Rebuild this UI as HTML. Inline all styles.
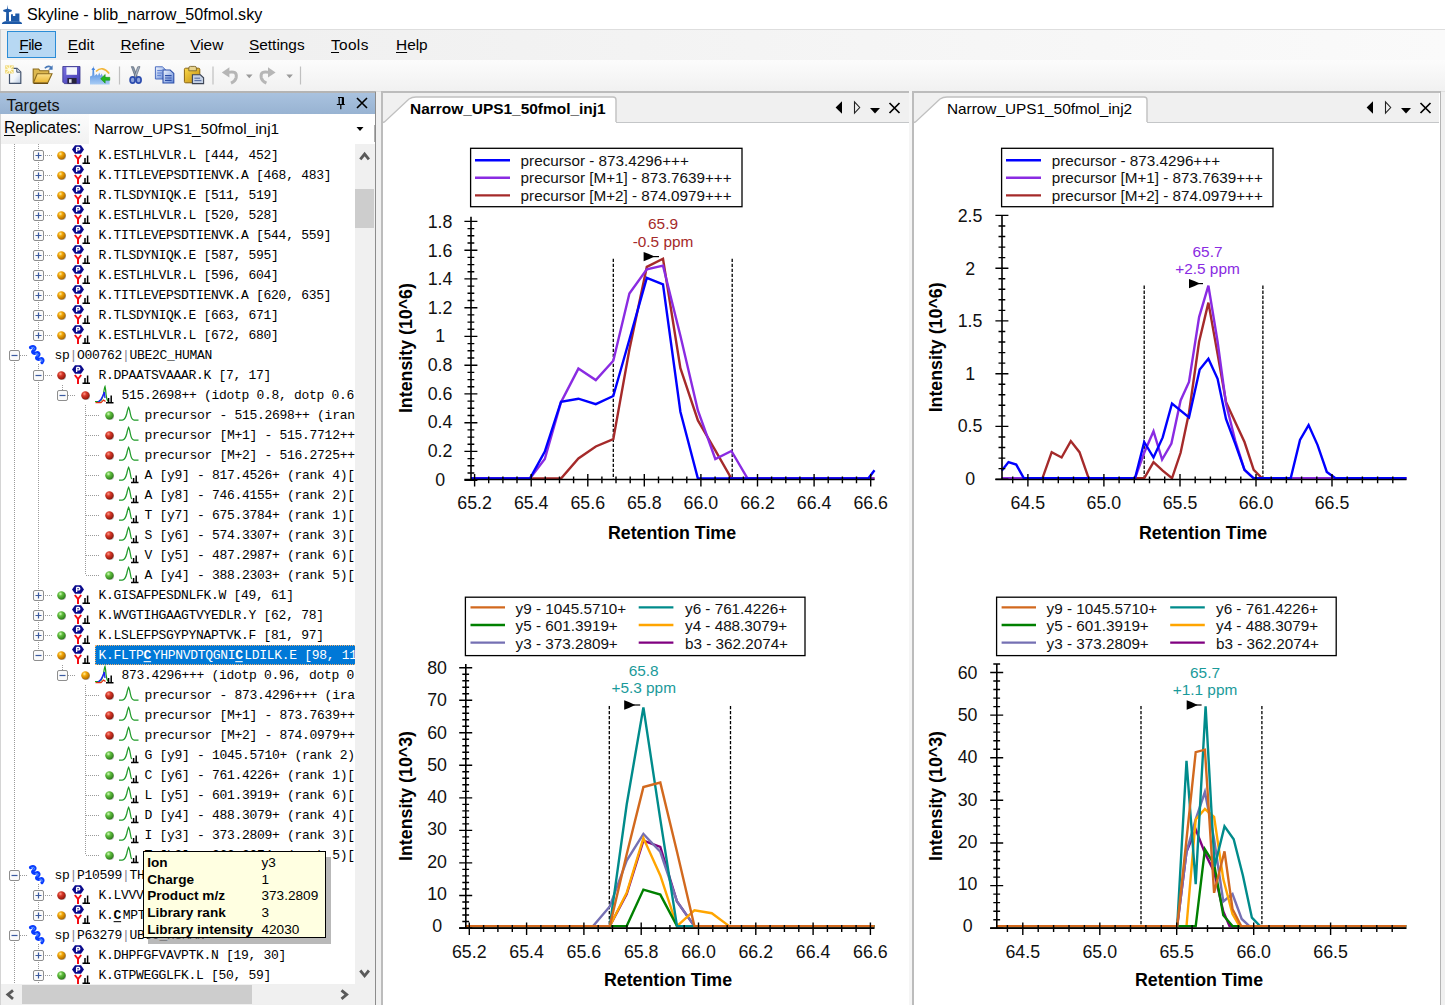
<!DOCTYPE html><html><head><meta charset="utf-8"><title>Skyline</title><style>
*{margin:0;padding:0;box-sizing:border-box}
html,body{width:1445px;height:1005px;overflow:hidden;background:#f0f0f0;font-family:"Liberation Sans",sans-serif;}
.abs{position:absolute}
.t{position:absolute;white-space:pre;line-height:1;color:#000}
u{text-decoration:underline;text-underline-offset:2px}
.mono{font-family:"Liberation Mono",monospace;font-size:13px;letter-spacing:-0.3px;position:absolute;white-space:pre;line-height:20px;height:20px;color:#000;transform-origin:0 50%;transform:scaleY(1.03);margin-top:1.1px}
svg{position:absolute;overflow:visible}
.mono b{margin-right:1.6px}
svg text{font-family:"Liberation Sans",sans-serif}
</style></head><body>
<svg width="0" height="0" style="position:absolute"><defs>
<radialGradient id="gR" cx="38%" cy="32%" r="70%"><stop offset="0" stop-color="#ff9a8a"/><stop offset="0.35" stop-color="#d83a2a"/><stop offset="1" stop-color="#8a1408"/></radialGradient>
<radialGradient id="gY" cx="38%" cy="32%" r="70%"><stop offset="0" stop-color="#fff0a0"/><stop offset="0.35" stop-color="#f2a80a"/><stop offset="1" stop-color="#a86400"/></radialGradient>
<radialGradient id="gG" cx="38%" cy="32%" r="70%"><stop offset="0" stop-color="#d8ffc0"/><stop offset="0.35" stop-color="#62c040"/><stop offset="1" stop-color="#2a7a18"/></radialGradient>
<g id="plus"><rect x="0.5" y="0.5" width="10" height="10" rx="1.5" fill="#fafafa" stroke="#8e8e8e"/><path d="M2.5 5.5h6M5.5 2.5v6" stroke="#3b5aa0" stroke-width="1.2"/></g>
<g id="minus"><rect x="0.5" y="0.5" width="10" height="10" rx="1.5" fill="#fafafa" stroke="#8e8e8e"/><path d="M2.5 5.5h6" stroke="#3b5aa0" stroke-width="1.2"/></g>
<g id="dotR"><circle cx="5" cy="5" r="4" fill="#555" opacity=".45"/><circle cx="4.4" cy="4.4" r="4.2" fill="url(#gR)"/></g>
<g id="dotY"><circle cx="5" cy="5" r="4" fill="#555" opacity=".45"/><circle cx="4.4" cy="4.4" r="4.2" fill="url(#gY)"/></g>
<g id="dotG"><circle cx="5" cy="5" r="4" fill="#555" opacity=".45"/><circle cx="4.4" cy="4.4" r="4.2" fill="url(#gG)"/></g>
<g id="pep"><path d="M0 4.5 L3 0.3 H9 L12 4.5 L9 8.7 H3 Z" fill="#0a0a8c"/><path d="M4.6 2.2V7 M4.6 2.5H6.6Q7.8 2.5 7.8 3.7T6.6 4.9H4.6" stroke="#fff" stroke-width="1.3" fill="none"/><path d="M2.8 10 L6 14 L9.2 10 M6 14 V19" stroke="#f40c14" stroke-width="2" fill="none"/><path d="M10.5 18.3H18 M13 18V13 M15.6 18V10.5" stroke="#000" stroke-width="1.5" fill="none"/></g>
<g id="prot"><path d="M1.5 1.5 C5 -0.5 7.5 2 5 4 C2.5 6 4 8 7 7 C10 6 11 8.5 8.5 10.5 C6.5 12 8 14 11 13 C14 12 15 14.5 13 16.5" stroke="#0a3cff" stroke-width="3.2" fill="none" stroke-linecap="round"/><path d="M2 2 C5 0.5 6.5 2 4.5 4 M6.5 7.5 C9 6.8 10 8.5 8 10.5 M10.5 13.4 C13 12.5 14 14.5 12.5 16" stroke="#5aa0ff" stroke-width="1" fill="none"/></g>
<g id="prec"><path d="M0 15.5 H4 Q7 15.5 8.5 8 Q9.3 2 10 0.5 Q10.8 4 11 8 Q11.5 13 13 15.5" stroke="#1a9a1a" stroke-width="1.2" fill="none"/><path d="M3 16 Q6.5 14 8 9.5 L9.3 6 L10 12 " stroke="#1a1aff" stroke-width="1.3" fill="none"/><path d="M0.5 16.6 H6 L8.5 14 L10.5 15.5" stroke="#e03010" stroke-width="1.3" fill="none"/><path d="M11 16.8H18.5 M13.6 16.5V12 M16.2 16.5V9.5" stroke="#000" stroke-width="1.5" fill="none"/></g>
<g id="tr"><path d="M0 13 H3.2 Q6.2 13 7.8 6.5 Q8.9 1.5 9.6 0.3 Q10.4 1.5 11.3 6.5 Q12.5 13 15 13 H19.5" stroke="#1e9a28" stroke-width="1.25" fill="none"/></g>
<g id="trb"><path d="M0 13 H3.2 Q6.2 13 7.8 6.5 Q8.9 1.5 9.6 0.3 Q10.4 1.5 11.3 6.5 Q11.8 10 12.6 12" stroke="#1e9a28" stroke-width="1.25" fill="none"/><path d="M12 15.6H19.5 M14.6 15.4V11 M17.2 15.4V8.5" stroke="#000" stroke-width="1.5" fill="none"/></g>
</defs></svg>
<div class="abs" style="left:0;top:0;width:1445px;height:29px;background:#fff"></div>
<svg style="left:0;top:0" width="26" height="28" viewBox="0 0 26 28"><path d="M1.9 24 Q2 21.9 5.2 21.3 H18.8 Q22 21.9 22.1 24 Z" fill="#1d59a7"/><path d="M7.55 4.8 L8 8.7 L11.9 10.1 L11.5 11.5 L8.9 12.3 L9.1 21.6 H6 L6.2 12.3 L3.5 11.5 L3.1 10.1 L7.1 8.7 Z" fill="#1d59a7"/><path d="M11 21.6 V14.3 H12.9 V16 H15.3 V13.5 H19.4 V21.6 Z" fill="#1d59a7"/></svg>
<div class="t" style="left:27px;top:6.4px;font-size:16.1px">Skyline - blib_narrow_50fmol.sky</div>
<div class="abs" style="left:0;top:29px;width:1445px;height:31px;background:linear-gradient(90deg,#f0f0f0 0,#f0f0f0 20%,#fafafa 100%);border-top:1px solid #dedede"></div>
<div class="abs" style="left:7.3px;top:31.2px;width:49px;height:26.5px;background:#b7d8f3;border:1.4px solid #2b8cd6"></div>
<div class="t" style="left:19.2px;top:37px;font-size:15.4px;letter-spacing:-0.45px"><u>F</u>ile</div>
<div class="t" style="left:67.8px;top:37px;font-size:15.4px;"><u>E</u>dit</div>
<div class="t" style="left:120.4px;top:37px;font-size:15.4px;"><u>R</u>efine</div>
<div class="t" style="left:190.2px;top:37px;font-size:15.4px;"><u>V</u>iew</div>
<div class="t" style="left:249.0px;top:37px;font-size:15.4px;"><u>S</u>ettings</div>
<div class="t" style="left:331.0px;top:37px;font-size:15.4px;letter-spacing:0.35px"><u>T</u>ools</div>
<div class="t" style="left:396.0px;top:37px;font-size:15.4px;"><u>H</u>elp</div>
<div class="abs" style="left:0;top:60px;width:1445px;height:31px;background:linear-gradient(#fcfcfc,#f1f1f1)"></div>
<div class="abs" style="left:0;top:91px;width:1445px;height:1px;background:#e0e0e0"></div>
<svg style="left:0;top:60px" width="320" height="31" viewBox="0 60 320 31">
<defs>
<linearGradient id="pg" x1="0" y1="0" x2="1" y2="1"><stop offset="0" stop-color="#fff"/><stop offset=".55" stop-color="#f2f6fb"/><stop offset="1" stop-color="#b4c6de"/></linearGradient>
<linearGradient id="fo" x1="0" y1="0" x2="0" y2="1"><stop offset="0" stop-color="#fbe08a"/><stop offset="1" stop-color="#eab530"/></linearGradient>
<linearGradient id="sv" x1="0" y1="0" x2="1" y2="1"><stop offset="0" stop-color="#7a72e0"/><stop offset="1" stop-color="#3f38b0"/></linearGradient>
<linearGradient id="sk" x1="0" y1="0" x2="0" y2="1"><stop offset="0" stop-color="#2f74d8"/><stop offset="1" stop-color="#a8ccf4"/></linearGradient>
<linearGradient id="cp" x1="0" y1="0" x2="1" y2="1"><stop offset="0" stop-color="#f4f8ff"/><stop offset="1" stop-color="#5f86d8"/></linearGradient>
<linearGradient id="cb" x1="0" y1="0" x2="1" y2="1"><stop offset="0" stop-color="#fbd84a"/><stop offset="1" stop-color="#c08c10"/></linearGradient>
</defs>
<!-- new -->
<path d="M9.5 68.3 H17 L20.8 72 V83.4 H9.5 Z" fill="url(#pg)" stroke="#44546e" stroke-width="1.2"/><path d="M16.8 68.5V72.2H20.6" fill="#dfe6f0" stroke="#44546e" stroke-width="1"/>
<rect x="5.2" y="65.4" width="8.4" height="8" fill="#ecd060" opacity=".9"/><path d="M9.4 64.8v9.2 M4.8 69.4h9.2 M6 66l6.8 6.8 M12.8 66l-6.8 6.8" stroke="#fff6c8" stroke-width="1.1"/><circle cx="9.4" cy="69.4" r="1.6" fill="#fffbe6"/>
<!-- open -->
<path d="M33.2 82.6 V69 H38.6 L40 70.8 H48.8 V74" fill="#dcb850" stroke="#8a6a1c" stroke-width="1.1"/><path d="M33.4 82.8 L37.2 73.8 H52 L47.8 82.8 Z" fill="url(#fo)" stroke="#8a6a1c" stroke-width="1.1"/><path d="M33.5 83.5H48" stroke="#6a4c10" stroke-width="1"/>
<path d="M44.8 68.3 Q48 64.8 51.4 67.6" fill="none" stroke="#4878b8" stroke-width="1.5"/><path d="M52.6 65.2 V69.8 H48.2 Z" fill="#4878b8"/>
<!-- save -->
<path d="M62.8 66.5 H80 V83.6 H64.3 L62.8 82.1 Z" fill="url(#sv)" stroke="#34308a" stroke-width=".8"/><rect x="66.4" y="67.2" width="10.6" height="7.6" fill="#f4f6fb"/><rect x="67.4" y="78" width="9.2" height="5.6" fill="#26243c"/><rect x="69" y="79.2" width="2.6" height="3.6" fill="#e0e0ea"/>
<!-- import -->
<path d="M90 84.4 V76.5 L92.2 75.5 L92.6 70.2 L91.4 69.4 L93 67.8 L93.2 65.8 L93.6 67.8 L95.2 69.4 L94 70.2 L94.5 76 L96.5 74 L98 75.8 L99.2 72.4 L100.4 75.8 L101.8 73.6 L103 77 H106.5 V79 H109.6 V84.4 Z" fill="url(#sk)"/>
<path d="M96 71.5 Q102.5 65.2 109.2 73.6" fill="none" stroke="#f2b63a" stroke-width="1.6"/>
<path d="M109.8 77.3 H105.2 V74.4 L100.6 78.8 L105.2 83.2 V80.3 H109.8 Z" fill="#24b41e" stroke="#128a10" stroke-width=".5"/>
<path d="M119.5 66.5V84.5" stroke="#c0c0c0" stroke-width="1.2"/>
<!-- cut -->
<path d="M131.3 66.6 L133.6 66.8 L137.2 76.4 L135.4 77.4 Z" fill="#8e9cae" stroke="#4c5868" stroke-width=".6"/><path d="M140 66.6 L137.7 66.8 L134.1 76.4 L135.9 77.4 Z" fill="#aab6c6" stroke="#4c5868" stroke-width=".6"/>
<ellipse cx="132.6" cy="80" rx="2.5" ry="3.1" fill="#8ea4dc" stroke="#2c4cae" stroke-width="1.7"/><ellipse cx="138.6" cy="80" rx="2.5" ry="3.1" fill="#8ea4dc" stroke="#2c4cae" stroke-width="1.7"/>
<!-- copy -->
<path d="M155.4 66.8 H162.4 L165.8 70 V79 H155.4 Z" fill="url(#cp)" stroke="#4a6cc0" stroke-width="1"/><path d="M163 70 H170.2 L173.8 73.4 V83 H163 Z" fill="url(#cp)" stroke="#2c4ea8" stroke-width="1.1"/><path d="M157.2 70.6h5 M157.2 73h5 M157.2 75.4h4" stroke="#5a7cd0" stroke-width="1"/><path d="M165 75.6h6.6 M165 78h6.6 M165 80.4h6.6" stroke="#2c4ea8" stroke-width="1.1"/>
<!-- paste -->
<rect x="184.4" y="68.2" width="15.4" height="14.6" rx="1.2" fill="url(#cb)" stroke="#8a6410" stroke-width="1"/><path d="M188.8 70.8 V68 Q188.8 66.4 190.4 66.4 H194.8 Q196.4 66.4 196.4 68 V70.8 Z" fill="#e8d490" stroke="#7a6428" stroke-width=".9"/><path d="M192.4 74.8 H200.4 L203.6 77.8 V83.6 H192.4 Z" fill="#c4d0e4" stroke="#3c4454" stroke-width="1.1"/><path d="M194.4 78.2h5.6 M194.4 80.6h7" stroke="#5068a0" stroke-width="1"/>
<path d="M213 66.5V84.5" stroke="#c0c0c0" stroke-width="1.2"/>
<!-- undo -->
<path d="M228 72.4 Q237.4 70.2 236.2 77.6 Q235.4 81.2 231 83.2" fill="none" stroke="#b6b6b6" stroke-width="3"/><path d="M221.8 72.6 L229.4 67.2 V77.6 Z" fill="#b6b6b6"/>
<path d="M246 74.5 h6.6 l-3.3 3.7 Z" fill="#9a9a9a"/>
<!-- redo -->
<path d="M269.4 72.4 Q260 70.2 261.2 77.6 Q262 81.2 266.4 83.2" fill="none" stroke="#b6b6b6" stroke-width="3"/><path d="M275.6 72.6 L268 67.2 V77.6 Z" fill="#b6b6b6"/>
<path d="M286.3 74.5 h6.6 l-3.3 3.7 Z" fill="#9a9a9a"/>
<path d="M300.5 66.5V84.5" stroke="#c0c0c0" stroke-width="1.2"/>
</svg>
<div class="abs" style="left:0;top:29px;width:1px;height:63px;background:#d2d2d2"></div>
<div class="abs" style="left:0;top:92.6px;width:376px;height:21.2px;background:linear-gradient(#a9c2df,#98b3d2)"></div>
<div class="abs" style="left:0;top:91.3px;width:376px;height:1.3px;background:#b4b4b4"></div>
<div class="t" style="left:6.4px;top:96.5px;font-size:16.2px;color:#111">Targets</div>
<svg style="left:330px;top:92px" width="46" height="22" viewBox="330 92 46 22"><path d="M338 97.5h5.6 M339.2 97.5v7 M342.4 97.5v7 M343.4 97.5v7 M336.8 104.5h8 M340.8 104.5v4.8" stroke="#000" stroke-width="1.2" fill="none"/><path d="M357 98 L367 108 M367 98 L357 108" stroke="#000" stroke-width="1.6"/></svg>
<div class="abs" style="left:0;top:114px;width:376px;height:30px;background:#fff"></div>
<div class="abs" style="left:0;top:114px;width:88.5px;height:30.5px;background:linear-gradient(#fcfcfc,#f1f1f1)"></div>
<div class="t" style="left:4px;top:120px;font-size:15.6px"><u>R</u>eplicates:</div>
<div class="t" style="left:94px;top:121px;font-size:15.35px">Narrow_UPS1_50fmol_inj1</div>
<svg style="left:354px;top:125px" width="12" height="8"><path d="M2.5 2 H9.5 L6 6 Z" fill="#000"/></svg>
<div class="abs" style="left:373.5px;top:125px;width:1.5px;height:17px;background:#b0b0b0"></div>
<div class="abs" id="tree" style="left:1px;top:144px;width:354px;height:840px;background:#fff;overflow:hidden">
<svg style="left:0;top:0" width="354" height="840"><path d="M44 11.5H51 M44 31.5H51 M44 51.5H51 M44 71.5H51 M44 91.5H51 M44 111.5H51 M44 131.5H51 M44 151.5H51 M44 171.5H51 M44 191.5H51 M19 211.5H27 M44 231.5H51 M67 251.5H75 M61.5 241V246 M85 271.5H98 M85 291.5H98 M85 311.5H98 M85 331.5H98 M85 351.5H98 M85 371.5H98 M85 391.5H98 M85 411.5H98 M85 431.5H98 M44 451.5H51 M44 471.5H51 M44 491.5H51 M44 511.5H51 M67 531.5H75 M61.5 521V526 M85 551.5H98 M85 571.5H98 M85 591.5H98 M85 611.5H98 M85 631.5H98 M85 651.5H98 M85 671.5H98 M85 691.5H98 M85 711.5H98 M19 731.5H27 M44 751.5H51 M44 771.5H51 M19 791.5H27 M44 811.5H51 M44 831.5H51 M13.5 0V840 M37.5 0V191 M37.5 220V511 M37.5 740V771 M37.5 800V840 M84.5 261V431 M84.5 541V711" stroke="#9a9a9a" stroke-width="1" stroke-dasharray="1 1" fill="none"/></svg>
<svg style="left:32px;top:6px" width="11" height="11"><use href="#plus"/></svg>
<svg style="left:56.0px;top:7.0px" width="9" height="9"><use href="#dotY"/></svg>
<svg style="left:71.0px;top:1px" width="19" height="20"><use href="#pep"/></svg>
<div class="mono" style="left:97.6px;top:1px;">K.ESTLHLVLR.L [444, 452]</div>
<svg style="left:32px;top:26px" width="11" height="11"><use href="#plus"/></svg>
<svg style="left:56.0px;top:27.0px" width="9" height="9"><use href="#dotY"/></svg>
<svg style="left:71.0px;top:21px" width="19" height="20"><use href="#pep"/></svg>
<div class="mono" style="left:97.6px;top:21px;">K.TITLEVEPSDTIENVK.A [468, 483]</div>
<svg style="left:32px;top:46px" width="11" height="11"><use href="#plus"/></svg>
<svg style="left:56.0px;top:47.0px" width="9" height="9"><use href="#dotY"/></svg>
<svg style="left:71.0px;top:41px" width="19" height="20"><use href="#pep"/></svg>
<div class="mono" style="left:97.6px;top:41px;">R.TLSDYNIQK.E [511, 519]</div>
<svg style="left:32px;top:66px" width="11" height="11"><use href="#plus"/></svg>
<svg style="left:56.0px;top:67.0px" width="9" height="9"><use href="#dotY"/></svg>
<svg style="left:71.0px;top:61px" width="19" height="20"><use href="#pep"/></svg>
<div class="mono" style="left:97.6px;top:61px;">K.ESTLHLVLR.L [520, 528]</div>
<svg style="left:32px;top:86px" width="11" height="11"><use href="#plus"/></svg>
<svg style="left:56.0px;top:87.0px" width="9" height="9"><use href="#dotY"/></svg>
<svg style="left:71.0px;top:81px" width="19" height="20"><use href="#pep"/></svg>
<div class="mono" style="left:97.6px;top:81px;">K.TITLEVEPSDTIENVK.A [544, 559]</div>
<svg style="left:32px;top:106px" width="11" height="11"><use href="#plus"/></svg>
<svg style="left:56.0px;top:107.0px" width="9" height="9"><use href="#dotY"/></svg>
<svg style="left:71.0px;top:101px" width="19" height="20"><use href="#pep"/></svg>
<div class="mono" style="left:97.6px;top:101px;">R.TLSDYNIQK.E [587, 595]</div>
<svg style="left:32px;top:126px" width="11" height="11"><use href="#plus"/></svg>
<svg style="left:56.0px;top:127.0px" width="9" height="9"><use href="#dotY"/></svg>
<svg style="left:71.0px;top:121px" width="19" height="20"><use href="#pep"/></svg>
<div class="mono" style="left:97.6px;top:121px;">K.ESTLHLVLR.L [596, 604]</div>
<svg style="left:32px;top:146px" width="11" height="11"><use href="#plus"/></svg>
<svg style="left:56.0px;top:147.0px" width="9" height="9"><use href="#dotY"/></svg>
<svg style="left:71.0px;top:141px" width="19" height="20"><use href="#pep"/></svg>
<div class="mono" style="left:97.6px;top:141px;">K.TITLEVEPSDTIENVK.A [620, 635]</div>
<svg style="left:32px;top:166px" width="11" height="11"><use href="#plus"/></svg>
<svg style="left:56.0px;top:167.0px" width="9" height="9"><use href="#dotY"/></svg>
<svg style="left:71.0px;top:161px" width="19" height="20"><use href="#pep"/></svg>
<div class="mono" style="left:97.6px;top:161px;">R.TLSDYNIQK.E [663, 671]</div>
<svg style="left:32px;top:186px" width="11" height="11"><use href="#plus"/></svg>
<svg style="left:56.0px;top:187.0px" width="9" height="9"><use href="#dotY"/></svg>
<svg style="left:71.0px;top:181px" width="19" height="20"><use href="#pep"/></svg>
<div class="mono" style="left:97.6px;top:181px;">K.ESTLHLVLR.L [672, 680]</div>
<svg style="left:8px;top:206px" width="11" height="11"><use href="#minus"/></svg>
<svg style="left:28px;top:202px" width="17" height="19"><use href="#prot"/></svg>
<div class="mono" style="left:53.4px;top:201px">sp<span style="color:#85838f">|</span>O00762<span style="color:#85838f">|</span>UBE2C_HUMAN</div>
<svg style="left:32px;top:226px" width="11" height="11"><use href="#minus"/></svg>
<svg style="left:56.0px;top:227.0px" width="9" height="9"><use href="#dotR"/></svg>
<svg style="left:71.0px;top:221px" width="19" height="20"><use href="#pep"/></svg>
<div class="mono" style="left:97.6px;top:221px;">R.DPAATSVAAAR.K [7, 17]</div>
<svg style="left:56px;top:246px" width="11" height="11"><use href="#minus"/></svg>
<svg style="left:79.5px;top:247.0px" width="9" height="9"><use href="#dotR"/></svg>
<svg style="left:94.0px;top:242px" width="19" height="20"><use href="#prec"/></svg>
<div class="mono" style="left:120.5px;top:241px">515.2698++ (idotp 0.8, dotp 0.6</div>
<svg style="left:103.5px;top:267.0px" width="9" height="9"><use href="#dotG"/></svg>
<svg style="left:118.0px;top:263px" width="20" height="20"><use href="#tr"/></svg>
<div class="mono" style="left:143.6px;top:261px">precursor - 515.2698++ (irank</div>
<svg style="left:103.5px;top:287.0px" width="9" height="9"><use href="#dotR"/></svg>
<svg style="left:118.0px;top:283px" width="20" height="20"><use href="#tr"/></svg>
<div class="mono" style="left:143.6px;top:281px">precursor [M+1] - 515.7712++ (</div>
<svg style="left:103.5px;top:307.0px" width="9" height="9"><use href="#dotR"/></svg>
<svg style="left:118.0px;top:303px" width="20" height="20"><use href="#tr"/></svg>
<div class="mono" style="left:143.6px;top:301px">precursor [M+2] - 516.2725++ (</div>
<svg style="left:103.5px;top:327.0px" width="9" height="9"><use href="#dotG"/></svg>
<svg style="left:118.0px;top:323px" width="20" height="20"><use href="#trb"/></svg>
<div class="mono" style="left:143.6px;top:321px">A [y9] - 817.4526+ (rank 4)[8</div>
<svg style="left:103.5px;top:347.0px" width="9" height="9"><use href="#dotR"/></svg>
<svg style="left:118.0px;top:343px" width="20" height="20"><use href="#trb"/></svg>
<div class="mono" style="left:143.6px;top:341px">A [y8] - 746.4155+ (rank 2)[7</div>
<svg style="left:103.5px;top:367.0px" width="9" height="9"><use href="#dotR"/></svg>
<svg style="left:118.0px;top:363px" width="20" height="20"><use href="#trb"/></svg>
<div class="mono" style="left:143.6px;top:361px">T [y7] - 675.3784+ (rank 1)[6</div>
<svg style="left:103.5px;top:387.0px" width="9" height="9"><use href="#dotR"/></svg>
<svg style="left:118.0px;top:383px" width="20" height="20"><use href="#trb"/></svg>
<div class="mono" style="left:143.6px;top:381px">S [y6] - 574.3307+ (rank 3)[5</div>
<svg style="left:103.5px;top:407.0px" width="9" height="9"><use href="#dotR"/></svg>
<svg style="left:118.0px;top:403px" width="20" height="20"><use href="#trb"/></svg>
<div class="mono" style="left:143.6px;top:401px">V [y5] - 487.2987+ (rank 6)[4</div>
<svg style="left:103.5px;top:427.0px" width="9" height="9"><use href="#dotG"/></svg>
<svg style="left:118.0px;top:423px" width="20" height="20"><use href="#trb"/></svg>
<div class="mono" style="left:143.6px;top:421px">A [y4] - 388.2303+ (rank 5)[3</div>
<svg style="left:32px;top:446px" width="11" height="11"><use href="#plus"/></svg>
<svg style="left:56.0px;top:447.0px" width="9" height="9"><use href="#dotG"/></svg>
<svg style="left:71.0px;top:441px" width="19" height="20"><use href="#pep"/></svg>
<div class="mono" style="left:97.6px;top:441px;">K.GISAFPESDNLFK.W [49, 61]</div>
<svg style="left:32px;top:466px" width="11" height="11"><use href="#plus"/></svg>
<svg style="left:56.0px;top:467.0px" width="9" height="9"><use href="#dotG"/></svg>
<svg style="left:71.0px;top:461px" width="19" height="20"><use href="#pep"/></svg>
<div class="mono" style="left:97.6px;top:461px;">K.WVGTIHGAAGTVYEDLR.Y [62, 78]</div>
<svg style="left:32px;top:486px" width="11" height="11"><use href="#plus"/></svg>
<svg style="left:56.0px;top:487.0px" width="9" height="9"><use href="#dotG"/></svg>
<svg style="left:71.0px;top:481px" width="19" height="20"><use href="#pep"/></svg>
<div class="mono" style="left:97.6px;top:481px;">K.LSLEFPSGYPYNAPTVK.F [81, 97]</div>
<svg style="left:32px;top:506px" width="11" height="11"><use href="#minus"/></svg>
<svg style="left:56.0px;top:507.0px" width="9" height="9"><use href="#dotY"/></svg>
<svg style="left:71.0px;top:501px" width="19" height="20"><use href="#pep"/></svg>
<div class="abs" style="left:94.2px;top:501.2px;width:300px;height:19.6px;background:#0078d7;border:1px dotted #f0b070"></div>
<div class="mono" style="left:97.6px;top:501px;color:#fff">K.FLTP<b><u>C</u></b>YHPNVDTQGNI<b><u>C</u></b>LDILK.E [98, 119]</div>
<svg style="left:56px;top:526px" width="11" height="11"><use href="#minus"/></svg>
<svg style="left:79.5px;top:527.0px" width="9" height="9"><use href="#dotY"/></svg>
<svg style="left:94.0px;top:522px" width="19" height="20"><use href="#prec"/></svg>
<div class="mono" style="left:120.5px;top:521px">873.4296+++ (idotp 0.96, dotp 0.9</div>
<svg style="left:103.5px;top:547.0px" width="9" height="9"><use href="#dotR"/></svg>
<svg style="left:118.0px;top:543px" width="20" height="20"><use href="#tr"/></svg>
<div class="mono" style="left:143.6px;top:541px">precursor - 873.4296+++ (irank</div>
<svg style="left:103.5px;top:567.0px" width="9" height="9"><use href="#dotR"/></svg>
<svg style="left:118.0px;top:563px" width="20" height="20"><use href="#tr"/></svg>
<div class="mono" style="left:143.6px;top:561px">precursor [M+1] - 873.7639+++</div>
<svg style="left:103.5px;top:587.0px" width="9" height="9"><use href="#dotR"/></svg>
<svg style="left:118.0px;top:583px" width="20" height="20"><use href="#tr"/></svg>
<div class="mono" style="left:143.6px;top:581px">precursor [M+2] - 874.0979+++</div>
<svg style="left:103.5px;top:607.0px" width="9" height="9"><use href="#dotG"/></svg>
<svg style="left:118.0px;top:603px" width="20" height="20"><use href="#trb"/></svg>
<div class="mono" style="left:143.6px;top:601px">G [y9] - 1045.5710+ (rank 2)[1</div>
<svg style="left:103.5px;top:627.0px" width="9" height="9"><use href="#dotG"/></svg>
<svg style="left:118.0px;top:623px" width="20" height="20"><use href="#trb"/></svg>
<div class="mono" style="left:143.6px;top:621px">C [y6] - 761.4226+ (rank 1)[7</div>
<svg style="left:103.5px;top:647.0px" width="9" height="9"><use href="#dotG"/></svg>
<svg style="left:118.0px;top:643px" width="20" height="20"><use href="#trb"/></svg>
<div class="mono" style="left:143.6px;top:641px">L [y5] - 601.3919+ (rank 6)[6</div>
<svg style="left:103.5px;top:667.0px" width="9" height="9"><use href="#dotG"/></svg>
<svg style="left:118.0px;top:663px" width="20" height="20"><use href="#trb"/></svg>
<div class="mono" style="left:143.6px;top:661px">D [y4] - 488.3079+ (rank 4)[4</div>
<svg style="left:103.5px;top:687.0px" width="9" height="9"><use href="#dotG"/></svg>
<svg style="left:118.0px;top:683px" width="20" height="20"><use href="#trb"/></svg>
<div class="mono" style="left:143.6px;top:681px">I [y3] - 373.2809+ (rank 3)[3</div>
<svg style="left:103.5px;top:707.0px" width="9" height="9"><use href="#dotG"/></svg>
<svg style="left:118.0px;top:703px" width="20" height="20"><use href="#trb"/></svg>
<div class="mono" style="left:143.6px;top:701px">T [b3] - 362.2074+ (rank 5)[3</div>
<svg style="left:8px;top:726px" width="11" height="11"><use href="#minus"/></svg>
<svg style="left:28px;top:722px" width="17" height="19"><use href="#prot"/></svg>
<div class="mono" style="left:53.4px;top:721px">sp<span style="color:#85838f">|</span>P10599<span style="color:#85838f">|</span>THIO_HUMAN</div>
<svg style="left:32px;top:746px" width="11" height="11"><use href="#plus"/></svg>
<svg style="left:56.0px;top:747.0px" width="9" height="9"><use href="#dotR"/></svg>
<svg style="left:71.0px;top:741px" width="19" height="20"><use href="#pep"/></svg>
<div class="mono" style="left:97.6px;top:741px;">K.LVVVDFSATWCGPCK.M [22, 36]</div>
<svg style="left:32px;top:766px" width="11" height="11"><use href="#plus"/></svg>
<svg style="left:56.0px;top:767.0px" width="9" height="9"><use href="#dotY"/></svg>
<svg style="left:71.0px;top:761px" width="19" height="20"><use href="#pep"/></svg>
<div class="mono" style="left:97.6px;top:761px;">K.<b><u>C</u></b>MPTFQFFK.K [72, 81]</div>
<svg style="left:8px;top:786px" width="11" height="11"><use href="#minus"/></svg>
<svg style="left:28px;top:782px" width="17" height="19"><use href="#prot"/></svg>
<div class="mono" style="left:53.4px;top:781px">sp<span style="color:#85838f">|</span>P63279<span style="color:#85838f">|</span>UBC9_HUMAN</div>
<svg style="left:32px;top:806px" width="11" height="11"><use href="#plus"/></svg>
<svg style="left:56.0px;top:807.0px" width="9" height="9"><use href="#dotY"/></svg>
<svg style="left:71.0px;top:801px" width="19" height="20"><use href="#pep"/></svg>
<div class="mono" style="left:97.6px;top:801px;">K.DHPFGFVAVPTK.N [19, 30]</div>
<svg style="left:32px;top:826px" width="11" height="11"><use href="#plus"/></svg>
<svg style="left:56.0px;top:827.0px" width="9" height="9"><use href="#dotG"/></svg>
<svg style="left:71.0px;top:821px" width="19" height="20"><use href="#pep"/></svg>
<div class="mono" style="left:97.6px;top:821px;">K.GTPWEGGLFK.L [50, 59]</div>
<div class="abs" style="left:147.4px;top:712.9px;width:182.7px;height:86.8px;background:#8a8a8a;opacity:.6"></div>
<div class="abs" style="left:142.4px;top:707.4px;width:182.7px;height:86.8px;background:#ffffe1;border:1.2px solid #000"></div>
<div class="t" style="left:146.2px;top:711.8px;font-size:13.6px;font-weight:bold">Ion</div>
<div class="t" style="left:260.5px;top:711.8px;font-size:13.6px">y3</div>
<div class="t" style="left:146.2px;top:728.5px;font-size:13.6px;font-weight:bold">Charge</div>
<div class="t" style="left:260.5px;top:728.5px;font-size:13.6px">1</div>
<div class="t" style="left:146.2px;top:745.3px;font-size:13.6px;font-weight:bold">Product m/z</div>
<div class="t" style="left:260.5px;top:745.3px;font-size:13.6px">373.2809</div>
<div class="t" style="left:146.2px;top:762.0px;font-size:13.6px;font-weight:bold">Library rank</div>
<div class="t" style="left:260.5px;top:762.0px;font-size:13.6px">3</div>
<div class="t" style="left:146.2px;top:778.8px;font-size:13.6px;font-weight:bold">Library intensity</div>
<div class="t" style="left:260.5px;top:778.8px;font-size:13.6px">42030</div>
</div>
<div class="abs" style="left:355px;top:144px;width:20px;height:840px;background:#f0f0f0"></div>
<div class="abs" style="left:355px;top:189px;width:19px;height:38.5px;background:#cdcdcd"></div>
<svg style="left:355px;top:144px" width="20" height="840"><path d="M5.3 15.3 L9.6 10 L13.9 15.3" stroke="#5a5a5a" stroke-width="2.8" fill="none"/><path d="M5.3 826.5 L9.6 831.8 L13.9 826.5" stroke="#5a5a5a" stroke-width="2.8" fill="none"/></svg>
<div class="abs" style="left:1px;top:984px;width:374px;height:21px;background:#f0f0f0"></div>
<div class="abs" style="left:21.5px;top:985.4px;width:230.5px;height:18.2px;background:#cdcdcd"></div>
<svg style="left:1px;top:984px" width="354" height="21"><path d="M12 6.3 L6.8 10.6 L12 14.9" stroke="#5a5a5a" stroke-width="2.8" fill="none"/><path d="M340.5 6.3 L345.7 10.6 L340.5 14.9" stroke="#5a5a5a" stroke-width="2.8" fill="none"/></svg>
<div class="abs" style="left:0;top:114px;width:1px;height:891px;background:#d4d4d4"></div>
<div class="abs" style="left:375px;top:92px;width:1px;height:913px;background:#8c8c8c"></div>
<div class="abs" style="left:381px;top:91px;width:528.0px;height:914px;background:#fff;border:2px solid #bcbcbc;border-bottom:none;border-right:none"></div>
<div class="abs" style="left:383px;top:93px;width:526.0px;height:29.5px;background:#f0f0f0;border-bottom:1.5px solid #c4c6c8"></div>
<svg style="left:383px;top:93px" width="300" height="31" viewBox="0 0 300 31"><path d="M0 30.5 L1 29 L26 6 Q29 4 33 4 H230 Q233 4 233 7 V30.5 Z" fill="#fff"/><path d="M0 29.5 L1.5 29 L26 6 Q29 4 33 4 H230 Q233 4 233 7 V29" fill="none" stroke="#c0c0c0" stroke-width="1.4"/></svg>
<div class="t" style="left:410.0px;top:101px;font-size:15.45px;font-weight:bold">Narrow_UPS1_50fmol_inj1</div>
<div class="abs" style="left:909px;top:91px;width:3px;height:914px;background:#f5f5f5"></div>
<div class="abs" style="left:912px;top:91px;width:528.7px;height:914px;background:#fff;border:2px solid #bcbcbc;border-bottom:none;border-right:1.5px solid #b4b4b4"></div>
<div class="abs" style="left:914px;top:93px;width:525.2px;height:29.5px;background:#f0f0f0;border-bottom:1.5px solid #c4c6c8"></div>
<svg style="left:914px;top:93px" width="300" height="31" viewBox="0 0 300 31"><path d="M0 30.5 L1 29 L26 6 Q29 4 33 4 H230 Q233 4 233 7 V30.5 Z" fill="#fff"/><path d="M0 29.5 L1.5 29 L26 6 Q29 4 33 4 H230 Q233 4 233 7 V29" fill="none" stroke="#c0c0c0" stroke-width="1.4"/></svg>
<div class="t" style="left:947.0px;top:101px;font-size:15.35px;">Narrow_UPS1_50fmol_inj2</div>
<svg style="left:833.6px;top:93px" width="80" height="29" viewBox="0 0 80 29"><path d="M8 8.3 V20.7 L1.6 14.5 Z" fill="#000"/><path d="M20.5 8.8 V20.2 L25.7 14.5 Z" fill="#f0f0f0" stroke="#222" stroke-width="1.1"/><path d="M36 15 H46 L41 20.5 Z" fill="#000"/><path d="M55.5 10 L65.5 20 M65.5 10 L55.5 20" stroke="#000" stroke-width="1.7"/></svg>
<svg style="left:1364.6px;top:93px" width="80" height="29" viewBox="0 0 80 29"><path d="M8 8.3 V20.7 L1.6 14.5 Z" fill="#000"/><path d="M20.5 8.8 V20.2 L25.7 14.5 Z" fill="#f0f0f0" stroke="#222" stroke-width="1.1"/><path d="M36 15 H46 L41 20.5 Z" fill="#000"/><path d="M55.5 10 L65.5 20 M65.5 10 L55.5 20" stroke="#000" stroke-width="1.7"/></svg>
<svg style="left:0;top:0" width="1445" height="1005" viewBox="0 0 1445 1005">
<path d="M613.3 258.7V479.5" stroke="#000" stroke-width="1.3" stroke-dasharray="3.3 1.7" fill="none"/>
<path d="M732.2 258.7V479.5" stroke="#000" stroke-width="1.3" stroke-dasharray="3.3 1.7" fill="none"/>
<polyline points="471.0,478.5 561.0,478.5 578.4,458.5 595.8,446.5 613.3,439.1 629.4,349.5 646.8,266.9 663.0,258.7 680.4,368.1 697.9,420.4 715.3,450.3 731.4,478.5 874.5,478.5" fill="none" stroke="#a52a2a" stroke-width="2.4" stroke-linejoin="miter" stroke-linecap="butt"/>
<polyline points="471.0,478.5 529.9,478.5 544.8,459.0 561.0,402.2 578.4,368.6 595.8,380.1 613.3,360.7 629.4,293.5 646.8,269.4 663.0,265.6 680.4,335.8 697.9,410.4 715.3,459.0 731.4,451.0 747.6,478.5 874.5,478.5" fill="none" stroke="#8a2be2" stroke-width="2.4" stroke-linejoin="miter" stroke-linecap="butt"/>
<polyline points="471.0,478.5 529.9,478.5 544.8,451.5 561.0,401.7 578.4,398.7 595.8,404.2 613.3,396.0 629.4,339.5 646.8,277.8 663.0,284.3 680.4,411.7 697.9,478.5 868.3,478.5 874.5,470.2" fill="none" stroke="#0000ff" stroke-width="2.4" stroke-linejoin="miter" stroke-linecap="butt"/>
<path d="M471.0 216.8V480.0 M464.4 479.5H874.5" stroke="#000" stroke-width="1.6" fill="none"/>
<path d="M474.6 473.9V486.4 M531.2 473.9V486.4 M587.8 473.9V486.4 M644.3 473.9V486.4 M700.9 473.9V486.4 M757.5 473.9V486.4 M814.1 473.9V486.4 M870.7 473.9V486.4 M488.7 476.5V483.3 M502.9 476.5V483.3 M517.0 476.5V483.3 M545.3 476.5V483.3 M559.5 476.5V483.3 M573.6 476.5V483.3 M601.9 476.5V483.3 M616.0 476.5V483.3 M630.2 476.5V483.3 M658.5 476.5V483.3 M672.6 476.5V483.3 M686.8 476.5V483.3 M715.1 476.5V483.3 M729.2 476.5V483.3 M743.4 476.5V483.3 M771.6 476.5V483.3 M785.8 476.5V483.3 M799.9 476.5V483.3 M828.2 476.5V483.3 M842.4 476.5V483.3 M856.5 476.5V483.3 M464.4 480.2H477.4 M464.4 451.4H477.4 M464.4 422.7H477.4 M464.4 393.9H477.4 M464.4 365.2H477.4 M464.4 336.4H477.4 M464.4 307.7H477.4 M464.4 278.9H477.4 M464.4 250.2H477.4 M464.4 221.4H477.4 M467.5 473.0H474.3 M467.5 465.8H474.3 M467.5 458.6H474.3 M467.5 444.3H474.3 M467.5 437.1H474.3 M467.5 429.9H474.3 M467.5 415.5H474.3 M467.5 408.3H474.3 M467.5 401.1H474.3 M467.5 386.8H474.3 M467.5 379.6H474.3 M467.5 372.4H474.3 M467.5 358.0H474.3 M467.5 350.8H474.3 M467.5 343.6H474.3 M467.5 329.3H474.3 M467.5 322.1H474.3 M467.5 314.9H474.3 M467.5 300.5H474.3 M467.5 293.3H474.3 M467.5 286.1H474.3 M467.5 271.8H474.3 M467.5 264.6H474.3 M467.5 257.4H474.3 M467.5 243.0H474.3 M467.5 235.8H474.3 M467.5 228.6H474.3" stroke="#000" stroke-width="1.4" fill="none"/>
<text x="474.6" y="508.9" font-size="17.8" text-anchor="middle" fill="#111">65.2</text>
<text x="531.2" y="508.9" font-size="17.8" text-anchor="middle" fill="#111">65.4</text>
<text x="587.8" y="508.9" font-size="17.8" text-anchor="middle" fill="#111">65.6</text>
<text x="644.3" y="508.9" font-size="17.8" text-anchor="middle" fill="#111">65.8</text>
<text x="700.9" y="508.9" font-size="17.8" text-anchor="middle" fill="#111">66.0</text>
<text x="757.5" y="508.9" font-size="17.8" text-anchor="middle" fill="#111">66.2</text>
<text x="814.1" y="508.9" font-size="17.8" text-anchor="middle" fill="#111">66.4</text>
<text x="870.7" y="508.9" font-size="17.8" text-anchor="middle" fill="#111">66.6</text>
<text x="440.1" y="485.5" font-size="17.8" text-anchor="middle" fill="#111">0</text>
<text x="440.1" y="456.9" font-size="17.8" text-anchor="middle" fill="#111">0.2</text>
<text x="440.1" y="428.3" font-size="17.8" text-anchor="middle" fill="#111">0.4</text>
<text x="440.1" y="399.6" font-size="17.8" text-anchor="middle" fill="#111">0.6</text>
<text x="440.1" y="371.0" font-size="17.8" text-anchor="middle" fill="#111">0.8</text>
<text x="440.1" y="342.4" font-size="17.8" text-anchor="middle" fill="#111">1</text>
<text x="440.1" y="313.8" font-size="17.8" text-anchor="middle" fill="#111">1.2</text>
<text x="440.1" y="285.2" font-size="17.8" text-anchor="middle" fill="#111">1.4</text>
<text x="440.1" y="256.6" font-size="17.8" text-anchor="middle" fill="#111">1.6</text>
<text x="440.1" y="227.9" font-size="17.8" text-anchor="middle" fill="#111">1.8</text>
<text x="672.0" y="538.5" font-size="17.8" font-weight="bold" text-anchor="middle" fill="#000">Retention Time</text>
<text transform="translate(411.5,348.1) rotate(-90)" font-size="17.8" font-weight="bold" text-anchor="middle" fill="#000">Intensity (10^6)</text>
<text x="663.0" y="228.9" font-size="15.4" text-anchor="middle" fill="#a52a2a">65.9</text>
<text x="663.0" y="246.9" font-size="15.4" text-anchor="middle" fill="#a52a2a">-0.5 ppm</text>
<path d="M643.6 251.9 Q648.8 253.6 654.6 256.6 Q648.8 259.6 643.6 261.3 Z" fill="#000"/><path d="M652.6 256.6H659.0" stroke="#000" stroke-width="1.2"/>
<rect x="470.6" y="148.3" width="271.4" height="58.4" fill="#fff" stroke="#000" stroke-width="1.3"/><path d="M475.0 160.2H510.0" stroke="#0000ff" stroke-width="2.4"/><text x="520.6" y="165.5" font-size="15.25" fill="#111">precursor - 873.4296+++</text><path d="M475.0 177.8H510.0" stroke="#8a2be2" stroke-width="2.4"/><text x="520.6" y="183.1" font-size="15.25" fill="#111">precursor [M+1] - 873.7639+++</text><path d="M475.0 195.4H510.0" stroke="#a52a2a" stroke-width="2.4"/><text x="520.6" y="200.7" font-size="15.25" fill="#111">precursor [M+2] - 874.0979+++</text>
</svg>
<svg style="left:0;top:0" width="1445" height="1005" viewBox="0 0 1445 1005">
<path d="M1144.2 285.6V479.5" stroke="#000" stroke-width="1.3" stroke-dasharray="3.3 1.7" fill="none"/>
<path d="M1262.9 285.6V479.5" stroke="#000" stroke-width="1.3" stroke-dasharray="3.3 1.7" fill="none"/>
<polyline points="1001.7,478.3 1042.4,478.3 1051.7,452.2 1061.6,457.5 1070.8,441.1 1079.5,452.2 1088.7,478.3 1144.2,478.3 1153.5,462.1 1162.7,470.7 1172.0,478.3 1180.6,452.8 1189.0,412.7 1199.1,341.8 1208.4,302.6 1217.6,354.1 1226.0,401.9 1235.2,422.0 1244.5,442.0 1253.7,469.8 1262.1,478.3 1406.4,478.3" fill="none" stroke="#a52a2a" stroke-width="2.4" stroke-linejoin="miter" stroke-linecap="butt"/>
<polyline points="1001.7,478.3 1135.0,478.3 1144.2,452.8 1153.5,431.2 1162.1,459.6 1171.4,443.6 1180.6,400.4 1189.0,381.9 1199.1,317.1 1208.4,285.7 1217.6,341.8 1226.0,403.5 1235.2,440.5 1244.5,469.8 1253.7,478.3 1406.4,478.3" fill="none" stroke="#8a2be2" stroke-width="2.4" stroke-linejoin="miter" stroke-linecap="butt"/>
<polyline points="1001.7,470.7 1008.5,462.1 1016.2,464.6 1023.9,478.3 1135.0,478.3 1144.2,442.0 1153.5,457.5 1162.7,437.4 1172.0,403.5 1189.0,417.4 1199.7,369.5 1208.4,358.8 1217.6,378.8 1226.0,418.9 1235.2,443.6 1244.5,469.8 1253.7,478.3 1290.7,478.3 1300.0,439.9 1308.6,425.1 1317.6,445.1 1326.8,472.0 1335.5,478.3 1406.4,478.3" fill="none" stroke="#0000ff" stroke-width="2.4" stroke-linejoin="miter" stroke-linecap="butt"/>
<path d="M1002.0 215.4V480.0 M995.4 479.5H1406.5" stroke="#000" stroke-width="1.6" fill="none"/>
<path d="M1027.9 473.9V486.4 M1103.9 473.9V486.4 M1180.0 473.9V486.4 M1256.0 473.9V486.4 M1332.0 473.9V486.4 M1012.7 476.5V483.3 M1043.1 476.5V483.3 M1058.3 476.5V483.3 M1073.5 476.5V483.3 M1088.7 476.5V483.3 M1119.1 476.5V483.3 M1134.3 476.5V483.3 M1149.5 476.5V483.3 M1164.7 476.5V483.3 M1195.2 476.5V483.3 M1210.4 476.5V483.3 M1225.6 476.5V483.3 M1240.8 476.5V483.3 M1271.2 476.5V483.3 M1286.4 476.5V483.3 M1301.6 476.5V483.3 M1316.8 476.5V483.3 M1347.2 476.5V483.3 M1362.4 476.5V483.3 M1377.6 476.5V483.3 M1392.8 476.5V483.3 M995.4 479.2H1008.4 M995.4 426.4H1008.4 M995.4 373.7H1008.4 M995.4 320.9H1008.4 M995.4 268.2H1008.4 M995.4 215.4H1008.4 M998.5 468.6H1005.3 M998.5 458.1H1005.3 M998.5 447.5H1005.3 M998.5 437.0H1005.3 M998.5 415.9H1005.3 M998.5 405.3H1005.3 M998.5 394.8H1005.3 M998.5 384.2H1005.3 M998.5 363.1H1005.3 M998.5 352.6H1005.3 M998.5 342.0H1005.3 M998.5 331.5H1005.3 M998.5 310.4H1005.3 M998.5 299.8H1005.3 M998.5 289.3H1005.3 M998.5 278.8H1005.3 M998.5 257.6H1005.3 M998.5 247.1H1005.3 M998.5 236.5H1005.3 M998.5 226.0H1005.3" stroke="#000" stroke-width="1.4" fill="none"/>
<text x="1027.9" y="508.9" font-size="17.8" text-anchor="middle" fill="#111">64.5</text>
<text x="1103.9" y="508.9" font-size="17.8" text-anchor="middle" fill="#111">65.0</text>
<text x="1180.0" y="508.9" font-size="17.8" text-anchor="middle" fill="#111">65.5</text>
<text x="1256.0" y="508.9" font-size="17.8" text-anchor="middle" fill="#111">66.0</text>
<text x="1332.0" y="508.9" font-size="17.8" text-anchor="middle" fill="#111">66.5</text>
<text x="970.1" y="484.5" font-size="17.8" text-anchor="middle" fill="#111">0</text>
<text x="970.1" y="432.0" font-size="17.8" text-anchor="middle" fill="#111">0.5</text>
<text x="970.1" y="379.5" font-size="17.8" text-anchor="middle" fill="#111">1</text>
<text x="970.1" y="327.0" font-size="17.8" text-anchor="middle" fill="#111">1.5</text>
<text x="970.1" y="274.5" font-size="17.8" text-anchor="middle" fill="#111">2</text>
<text x="970.1" y="221.9" font-size="17.8" text-anchor="middle" fill="#111">2.5</text>
<text x="1203.0" y="538.5" font-size="17.8" font-weight="bold" text-anchor="middle" fill="#000">Retention Time</text>
<text transform="translate(941.5,347.4) rotate(-90)" font-size="17.8" font-weight="bold" text-anchor="middle" fill="#000">Intensity (10^6)</text>
<text x="1207.5" y="256.7" font-size="15.4" text-anchor="middle" fill="#8a2be2">65.7</text>
<text x="1207.5" y="274.1" font-size="15.4" text-anchor="middle" fill="#8a2be2">+2.5 ppm</text>
<path d="M1189.0 278.9 Q1194.2 280.6 1200.0 283.6 Q1194.2 286.6 1189.0 288.3 Z" fill="#000"/><path d="M1198.0 283.6H1203.0" stroke="#000" stroke-width="1.2"/>
<rect x="1001.6" y="148.3" width="271.4" height="58.4" fill="#fff" stroke="#000" stroke-width="1.3"/><path d="M1006.0 160.2H1041.0" stroke="#0000ff" stroke-width="2.4"/><text x="1051.8" y="165.5" font-size="15.25" fill="#111">precursor - 873.4296+++</text><path d="M1006.0 177.8H1041.0" stroke="#8a2be2" stroke-width="2.4"/><text x="1051.8" y="183.1" font-size="15.25" fill="#111">precursor [M+1] - 873.7639+++</text><path d="M1006.0 195.4H1041.0" stroke="#a52a2a" stroke-width="2.4"/><text x="1051.8" y="200.7" font-size="15.25" fill="#111">precursor [M+2] - 874.0979+++</text>
</svg>
<svg style="left:0;top:0" width="1445" height="1005" viewBox="0 0 1445 1005">
<path d="M609.3 706.0V928.1" stroke="#000" stroke-width="1.3" stroke-dasharray="3.3 1.7" fill="none"/>
<path d="M730.5 706.0V928.1" stroke="#000" stroke-width="1.3" stroke-dasharray="3.3 1.7" fill="none"/>
<polyline points="465.8,926.1 609.8,926.1 626.7,894.1 643.4,840.6 660.3,846.8 677.0,901.5 694.4,926.1 874.6,926.1" fill="none" stroke="#800080" stroke-width="2.4" stroke-linejoin="miter" stroke-linecap="butt"/>
<polyline points="465.8,926.1 593.1,926.1 609.8,906.5 626.7,860.5 643.4,833.9 660.3,851.8 677.0,901.5 694.4,926.1 874.6,926.1" fill="none" stroke="#7570b3" stroke-width="2.4" stroke-linejoin="miter" stroke-linecap="butt"/>
<polyline points="465.8,926.1 609.8,926.1 626.7,892.8 643.4,838.1 660.3,875.4 677.0,926.1 694.4,910.3 711.8,913.2 729.2,926.1 874.6,926.1" fill="none" stroke="#ffa500" stroke-width="2.4" stroke-linejoin="miter" stroke-linecap="butt"/>
<polyline points="465.8,926.1 626.7,926.1 643.4,889.6 660.3,894.6 677.0,926.1 874.6,926.1" fill="none" stroke="#008000" stroke-width="2.4" stroke-linejoin="miter" stroke-linecap="butt"/>
<polyline points="465.8,926.1 609.8,926.1 626.7,804.5 643.4,707.4 660.3,819.4 677.0,926.1 874.6,926.1" fill="none" stroke="#008b8b" stroke-width="2.4" stroke-linejoin="miter" stroke-linecap="butt"/>
<polyline points="465.8,926.1 609.8,926.1 626.7,854.3 643.4,787.1 660.3,782.6 677.0,851.8 694.4,926.1 874.6,926.1" fill="none" stroke="#d2691e" stroke-width="2.4" stroke-linejoin="miter" stroke-linecap="butt"/>
<path d="M465.8 664.0V928.6 M459.2 928.1H874.5" stroke="#000" stroke-width="1.6" fill="none"/>
<path d="M469.3 922.5V935.0 M526.6 922.5V935.0 M583.9 922.5V935.0 M641.2 922.5V935.0 M698.5 922.5V935.0 M755.8 922.5V935.0 M813.1 922.5V935.0 M870.4 922.5V935.0 M483.6 925.1V931.9 M497.9 925.1V931.9 M512.3 925.1V931.9 M540.9 925.1V931.9 M555.2 925.1V931.9 M569.6 925.1V931.9 M598.2 925.1V931.9 M612.5 925.1V931.9 M626.9 925.1V931.9 M655.5 925.1V931.9 M669.9 925.1V931.9 M684.2 925.1V931.9 M712.8 925.1V931.9 M727.2 925.1V931.9 M741.5 925.1V931.9 M770.1 925.1V931.9 M784.4 925.1V931.9 M798.8 925.1V931.9 M827.4 925.1V931.9 M841.7 925.1V931.9 M856.1 925.1V931.9 M459.2 928.0H472.2 M459.2 895.5H472.2 M459.2 862.9H472.2 M459.2 830.4H472.2 M459.2 797.9H472.2 M459.2 765.3H472.2 M459.2 732.8H472.2 M459.2 700.3H472.2 M459.2 667.7H472.2 M462.3 921.5H469.1 M462.3 915.0H469.1 M462.3 908.5H469.1 M462.3 902.0H469.1 M462.3 889.0H469.1 M462.3 882.5H469.1 M462.3 875.9H469.1 M462.3 869.4H469.1 M462.3 856.4H469.1 M462.3 849.9H469.1 M462.3 843.4H469.1 M462.3 836.9H469.1 M462.3 823.9H469.1 M462.3 817.4H469.1 M462.3 810.9H469.1 M462.3 804.4H469.1 M462.3 791.4H469.1 M462.3 784.8H469.1 M462.3 778.3H469.1 M462.3 771.8H469.1 M462.3 758.8H469.1 M462.3 752.3H469.1 M462.3 745.8H469.1 M462.3 739.3H469.1 M462.3 726.3H469.1 M462.3 719.8H469.1 M462.3 713.3H469.1 M462.3 706.8H469.1 M462.3 693.7H469.1 M462.3 687.2H469.1 M462.3 680.7H469.1 M462.3 674.2H469.1" stroke="#000" stroke-width="1.4" fill="none"/>
<text x="469.3" y="957.5" font-size="17.8" text-anchor="middle" fill="#111">65.2</text>
<text x="526.6" y="957.5" font-size="17.8" text-anchor="middle" fill="#111">65.4</text>
<text x="583.9" y="957.5" font-size="17.8" text-anchor="middle" fill="#111">65.6</text>
<text x="641.2" y="957.5" font-size="17.8" text-anchor="middle" fill="#111">65.8</text>
<text x="698.5" y="957.5" font-size="17.8" text-anchor="middle" fill="#111">66.0</text>
<text x="755.8" y="957.5" font-size="17.8" text-anchor="middle" fill="#111">66.2</text>
<text x="813.1" y="957.5" font-size="17.8" text-anchor="middle" fill="#111">66.4</text>
<text x="870.4" y="957.5" font-size="17.8" text-anchor="middle" fill="#111">66.6</text>
<text x="437.1" y="931.9" font-size="17.8" text-anchor="middle" fill="#111">0</text>
<text x="437.1" y="899.7" font-size="17.8" text-anchor="middle" fill="#111">10</text>
<text x="437.1" y="867.5" font-size="17.8" text-anchor="middle" fill="#111">20</text>
<text x="437.1" y="835.3" font-size="17.8" text-anchor="middle" fill="#111">30</text>
<text x="437.1" y="803.1" font-size="17.8" text-anchor="middle" fill="#111">40</text>
<text x="437.1" y="770.9" font-size="17.8" text-anchor="middle" fill="#111">50</text>
<text x="437.1" y="738.6" font-size="17.8" text-anchor="middle" fill="#111">60</text>
<text x="437.1" y="706.4" font-size="17.8" text-anchor="middle" fill="#111">70</text>
<text x="437.1" y="674.2" font-size="17.8" text-anchor="middle" fill="#111">80</text>
<text x="668.0" y="986.0" font-size="17.8" font-weight="bold" text-anchor="middle" fill="#000">Retention Time</text>
<text transform="translate(411.5,796.0) rotate(-90)" font-size="17.8" font-weight="bold" text-anchor="middle" fill="#000">Intensity (10^3)</text>
<text x="643.7" y="676.4" font-size="15.4" text-anchor="middle" fill="#1a9a9a">65.8</text>
<text x="643.7" y="693.4" font-size="15.4" text-anchor="middle" fill="#1a9a9a">+5.3 ppm</text>
<path d="M624.2 700.3 Q629.4 702.0 635.2 705.0 Q629.4 708.0 624.2 709.7 Z" fill="#000"/><path d="M633.2 705.0H640.2" stroke="#000" stroke-width="1.2"/>
<rect x="465.4" y="597.2" width="339.6" height="58.4" fill="#fff" stroke="#000" stroke-width="1.3"/><path d="M470.5 607.4H505.0" stroke="#d2691e" stroke-width="2.4"/><text x="515.6" y="613.7" font-size="15.25" fill="#111">y9 - 1045.5710+</text><path d="M470.5 625.0H505.0" stroke="#008000" stroke-width="2.4"/><text x="515.6" y="631.3" font-size="15.25" fill="#111">y5 - 601.3919+</text><path d="M470.5 642.6H505.0" stroke="#7570b3" stroke-width="2.4"/><text x="515.6" y="648.9" font-size="15.25" fill="#111">y3 - 373.2809+</text><path d="M638.7 607.4H673.4" stroke="#008b8b" stroke-width="2.4"/><text x="685.0" y="613.7" font-size="15.25" fill="#111">y6 - 761.4226+</text><path d="M638.7 625.0H673.4" stroke="#ffa500" stroke-width="2.4"/><text x="685.0" y="631.3" font-size="15.25" fill="#111">y4 - 488.3079+</text><path d="M638.7 642.6H673.4" stroke="#800080" stroke-width="2.4"/><text x="685.0" y="648.9" font-size="15.25" fill="#111">b3 - 362.2074+</text>
</svg>
<svg style="left:0;top:0" width="1445" height="1005" viewBox="0 0 1445 1005">
<path d="M1141.0 706.0V928.1" stroke="#000" stroke-width="1.3" stroke-dasharray="3.3 1.7" fill="none"/>
<path d="M1261.9 706.0V928.1" stroke="#000" stroke-width="1.3" stroke-dasharray="3.3 1.7" fill="none"/>
<polyline points="996.8,926.1 1177.2,926.1 1186.5,851.8 1195.7,829.4 1204.9,853.0 1214.1,871.7 1223.3,911.5 1229.5,926.1 1406.2,926.1" fill="none" stroke="#800080" stroke-width="2.4" stroke-linejoin="miter" stroke-linecap="butt"/>
<polyline points="996.8,926.1 1177.2,926.1 1186.5,851.8 1195.7,819.4 1204.9,792.0 1214.1,839.3 1223.3,901.5 1232.5,894.1 1241.7,919.0 1249.4,926.1 1406.2,926.1" fill="none" stroke="#7570b3" stroke-width="2.4" stroke-linejoin="miter" stroke-linecap="butt"/>
<polyline points="996.8,926.1 1186.5,926.1 1195.7,819.4 1204.9,809.0 1214.1,816.9 1223.3,879.1 1232.5,914.0 1239.5,926.1 1406.2,926.1" fill="none" stroke="#ffa500" stroke-width="2.4" stroke-linejoin="miter" stroke-linecap="butt"/>
<polyline points="996.8,926.1 1195.7,926.1 1204.9,849.3 1214.1,864.2 1223.3,915.2 1232.5,926.1 1406.2,926.1" fill="none" stroke="#008000" stroke-width="2.4" stroke-linejoin="miter" stroke-linecap="butt"/>
<polyline points="996.8,926.1 1177.2,926.1 1186.5,760.9 1195.7,884.1 1205.6,706.2 1214.6,866.7 1224.5,826.4 1233.7,839.3 1242.9,875.4 1251.9,917.7 1260.1,926.1 1406.2,926.1" fill="none" stroke="#008b8b" stroke-width="2.4" stroke-linejoin="miter" stroke-linecap="butt"/>
<polyline points="996.8,926.1 1177.2,926.1 1186.5,839.3 1195.7,752.2 1204.9,749.7 1214.1,892.8 1224.5,851.3 1232.5,909.0 1241.2,926.1 1406.2,926.1" fill="none" stroke="#d2691e" stroke-width="2.4" stroke-linejoin="miter" stroke-linecap="butt"/>
<path d="M996.8 664.0V928.6 M990.2 928.1H1406.5" stroke="#000" stroke-width="1.6" fill="none"/>
<path d="M1022.8 922.5V935.0 M1099.8 922.5V935.0 M1176.7 922.5V935.0 M1253.7 922.5V935.0 M1330.6 922.5V935.0 M1007.4 925.1V931.9 M1038.2 925.1V931.9 M1053.6 925.1V931.9 M1069.0 925.1V931.9 M1084.4 925.1V931.9 M1115.1 925.1V931.9 M1130.5 925.1V931.9 M1145.9 925.1V931.9 M1161.3 925.1V931.9 M1192.1 925.1V931.9 M1207.5 925.1V931.9 M1222.9 925.1V931.9 M1238.3 925.1V931.9 M1269.0 925.1V931.9 M1284.4 925.1V931.9 M1299.8 925.1V931.9 M1315.2 925.1V931.9 M1346.0 925.1V931.9 M1361.4 925.1V931.9 M1376.8 925.1V931.9 M1392.2 925.1V931.9 M990.2 928.2H1003.2 M990.2 885.6H1003.2 M990.2 843.0H1003.2 M990.2 800.3H1003.2 M990.2 757.7H1003.2 M990.2 715.1H1003.2 M990.2 672.5H1003.2 M993.3 919.7H1000.1 M993.3 911.2H1000.1 M993.3 902.6H1000.1 M993.3 894.1H1000.1 M993.3 877.1H1000.1 M993.3 868.5H1000.1 M993.3 860.0H1000.1 M993.3 851.5H1000.1 M993.3 834.4H1000.1 M993.3 825.9H1000.1 M993.3 817.4H1000.1 M993.3 808.9H1000.1 M993.3 791.8H1000.1 M993.3 783.3H1000.1 M993.3 774.8H1000.1 M993.3 766.2H1000.1 M993.3 749.2H1000.1 M993.3 740.7H1000.1 M993.3 732.1H1000.1 M993.3 723.6H1000.1 M993.3 706.6H1000.1 M993.3 698.1H1000.1 M993.3 689.5H1000.1 M993.3 681.0H1000.1 M993.3 664.0H1000.1" stroke="#000" stroke-width="1.4" fill="none"/>
<text x="1022.8" y="957.5" font-size="17.8" text-anchor="middle" fill="#111">64.5</text>
<text x="1099.8" y="957.5" font-size="17.8" text-anchor="middle" fill="#111">65.0</text>
<text x="1176.7" y="957.5" font-size="17.8" text-anchor="middle" fill="#111">65.5</text>
<text x="1253.7" y="957.5" font-size="17.8" text-anchor="middle" fill="#111">66.0</text>
<text x="1330.6" y="957.5" font-size="17.8" text-anchor="middle" fill="#111">66.5</text>
<text x="967.6" y="932.1" font-size="17.8" text-anchor="middle" fill="#111">0</text>
<text x="967.6" y="889.9" font-size="17.8" text-anchor="middle" fill="#111">10</text>
<text x="967.6" y="847.7" font-size="17.8" text-anchor="middle" fill="#111">20</text>
<text x="967.6" y="805.5" font-size="17.8" text-anchor="middle" fill="#111">30</text>
<text x="967.6" y="763.4" font-size="17.8" text-anchor="middle" fill="#111">40</text>
<text x="967.6" y="721.2" font-size="17.8" text-anchor="middle" fill="#111">50</text>
<text x="967.6" y="679.0" font-size="17.8" text-anchor="middle" fill="#111">60</text>
<text x="1199.0" y="986.0" font-size="17.8" font-weight="bold" text-anchor="middle" fill="#000">Retention Time</text>
<text transform="translate(941.5,796.0) rotate(-90)" font-size="17.8" font-weight="bold" text-anchor="middle" fill="#000">Intensity (10^3)</text>
<text x="1205.0" y="678.1" font-size="15.4" text-anchor="middle" fill="#1a9a9a">65.7</text>
<text x="1205.0" y="695.1" font-size="15.4" text-anchor="middle" fill="#1a9a9a">+1.1 ppm</text>
<path d="M1186.7 700.3 Q1191.9 702.0 1197.7 705.0 Q1191.9 708.0 1186.7 709.7 Z" fill="#000"/><path d="M1195.7 705.0H1201.6" stroke="#000" stroke-width="1.2"/>
<rect x="996.6" y="597.2" width="339.6" height="58.4" fill="#fff" stroke="#000" stroke-width="1.3"/><path d="M1001.6 607.4H1036.0" stroke="#d2691e" stroke-width="2.4"/><text x="1046.6" y="613.7" font-size="15.25" fill="#111">y9 - 1045.5710+</text><path d="M1001.6 625.0H1036.0" stroke="#008000" stroke-width="2.4"/><text x="1046.6" y="631.3" font-size="15.25" fill="#111">y5 - 601.3919+</text><path d="M1001.6 642.6H1036.0" stroke="#7570b3" stroke-width="2.4"/><text x="1046.6" y="648.9" font-size="15.25" fill="#111">y3 - 373.2809+</text><path d="M1170.2 607.4H1204.8" stroke="#008b8b" stroke-width="2.4"/><text x="1216.0" y="613.7" font-size="15.25" fill="#111">y6 - 761.4226+</text><path d="M1170.2 625.0H1204.8" stroke="#ffa500" stroke-width="2.4"/><text x="1216.0" y="631.3" font-size="15.25" fill="#111">y4 - 488.3079+</text><path d="M1170.2 642.6H1204.8" stroke="#800080" stroke-width="2.4"/><text x="1216.0" y="648.9" font-size="15.25" fill="#111">b3 - 362.2074+</text>
</svg>
</body></html>
